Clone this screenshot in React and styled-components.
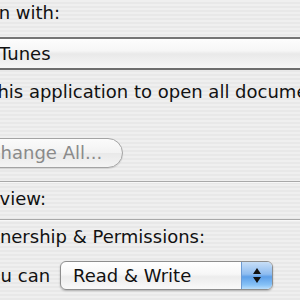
import React from 'react';
import styled, { createGlobalStyle } from 'styled-components';

const GlobalStyle = createGlobalStyle`
    html, body {
        margin: 0;
        padding: 0;
        width: 300px;
        height: 300px;
        overflow: hidden;
        background: repeating-linear-gradient(to bottom, #efefef 0px, #efefef 2px, #e8e8e8 2px, #e8e8e8 4px);
    }
    body {
        font-family: "DejaVu Sans", "Liberation Sans", sans-serif;
        font-size: 18px;
        color: #111;
    }
`

const Panel = styled.div`
    display: flex;
    flex-direction: column;
    margin-left: -50px;
    width: 420px;
    line-height: 22px;
`

const Header = styled.div`
    padding-left: ${props => props.indent}px;
    margin-top: ${props => props.top}px;
    white-space: nowrap;
`

const AppPopup = styled.div`
    margin-top: 13px;
    margin-left: 12px;
    height: 29px;
    line-height: 29px;
    padding-left: 32px;
    border-top: 2px solid #747474;
    border-bottom: 2px solid #6e6e6e;
    background: linear-gradient(to bottom, #fdfdfd 0%, #f6f6f6 40%, #e9e9e9 52%, #ececec 62%, #f7f7f7 100%);
    white-space: nowrap;
`

const Body = styled.div`
    margin-top: 11px;
    padding-left: 1px;
    white-space: nowrap;
`

const PillButton = styled.div`
    margin-top: 13px;
    margin-left: 12px;
    width: 134px;
    height: 28px;
    line-height: 28px;
    padding-left: 25px;
    border: 1px solid #a4a4a4;
    border-radius: 15px;
    background: linear-gradient(to bottom, #fbfbfb 0%, #f2f2f2 50%, #e9e9e9 51%, #f4f4f4 100%);
    box-shadow: 0 1px 1px rgba(0, 0, 0, 0.12);
    color: #8a8a8a;
    white-space: nowrap;
`

const Separator = styled.div`
    margin-top: ${props => props.top}px;
    height: 1px;
    background: #a9a9a9;
    border-bottom: 1px solid #f8f8f8;
`

const PermRow = styled.div`
    display: flex;
    align-items: center;
    margin-top: 13px;
    padding-left: 31px;
    white-space: nowrap;
`

const Label = styled.span`
    width: 79px;
`

const Select = styled.div`
    display: flex;
    width: 211px;
    height: 27px;
    line-height: 27px;
    border: 1px solid #8e8e8e;
    border-radius: 6px;
    overflow: hidden;
    box-shadow: 0 1px 2px rgba(0, 0, 0, 0.25);
    background: linear-gradient(to bottom, #ffffff 0%, #f7f7f7 45%, #ececec 55%, #fafafa 100%);
`

const SelectText = styled.span`
    flex: 1;
    padding-left: 12px;
`

const Stepper = styled.div`
    width: 30px;
    display: flex;
    flex-direction: column;
    align-items: center;
    justify-content: center;
    gap: 3px;
    border-left: 1px solid #6d9bd3;
    background: linear-gradient(to bottom, #c7def7 0%, #8ebcf0 45%, #5d9fe8 55%, #87c2f7 85%, #b9defc 100%);
`

export default function App() {
    return (
        <>
            <GlobalStyle />
            <Panel>
                <Header indent={12} top={2}>Open with:</Header>
                <AppPopup>iTunes</AppPopup>
                <Body>
                    Use this application to open all documents like<br />
                    this.
                </Body>
                <PillButton>Change All...</PillButton>
                <Separator top={13} />
                <Header indent={21} top={5}>Preview:</Header>
                <Separator top={9} />
                <Header indent={21} top={5}>Ownership &amp; Permissions:</Header>
                <PermRow>
                    <Label>You can</Label>
                    <Select>
                        <SelectText>Read &amp; Write</SelectText>
                        <Stepper>
                            <svg width="8" height="6" viewBox="0 0 8 6"><path d="M4 0 L8 6 L0 6 Z" fill="#111" /></svg>
                            <svg width="8" height="6" viewBox="0 0 8 6"><path d="M0 0 L8 0 L4 6 Z" fill="#111" /></svg>
                        </Stepper>
                    </Select>
                </PermRow>
            </Panel>
        </>
    );
}
